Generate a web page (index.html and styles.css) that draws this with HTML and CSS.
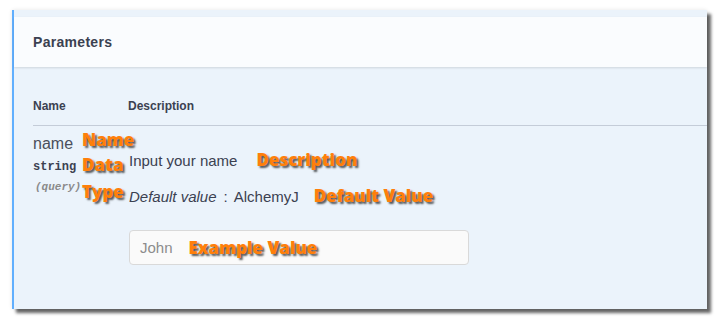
FILE: index.html
```html
<!DOCTYPE html>
<html lang="en">

<head>
    <meta charset="UTF-8">
    <meta name="viewport" content="width=device-width, initial-scale=1.0">
    <title>Parameters</title>
    <link rel="stylesheet" href="styles.css">
</head>

<body>
    <div class="page">
        <section class="opblock">
            <!-- Header của khối tham số -->
            <div class="opblock-header">
                <h4>Parameters</h4>
            </div>

            <div class="params">
                <div class="params-head">
                    <div class="col-name">Name</div>
                    <div class="col-desc">Description</div>
                </div>

                <div class="param-row">
                    <div class="col-name param-left">
                        <div class="param-info">
                            <div class="param-name">name</div>
                            <div class="param-type">string</div>
                            <div class="param-in">(query)</div>
                        </div>
                        <div class="notes">
                            <span class="note note-name">Name</span>
                            <span class="note note-data">Data</span>
                            <span class="note note-type">Type</span>
                        </div>
                    </div>

                    <div class="col-desc param-right">
                        <div class="desc-line first">
                            <span>Input your name</span>
                            <span class="note wide">Description</span>
                        </div>
                        <div class="desc-line second">
                            <span><i>Default value</i><span class="colon">:</span>AlchemyJ</span>
                            <span class="note">Default Value</span>
                        </div>
                        <div class="example-box">
                            <span class="example-text">John</span>
                            <span class="note">Example Value</span>
                        </div>
                    </div>
                </div>
            </div>
        </section>
    </div>
</body>

</html>
```

FILE: styles.css
```css
body {
    margin: 0;
    padding: 0;
    background-color: #fff;
    font-family: "Liberation Sans", Arial, sans-serif;
    color: #3b4151;
}

.page {
    padding: 10px 11px 11px 12px;
}

/* Khối tham số */
.opblock {
    background-color: #ebf3fb;
    border-left: 2px solid #61affe;
    padding-top: 7px;
    box-shadow: 4px 4px 3px rgba(0, 0, 0, 0.6), 0 0 4px rgba(0, 0, 0, 0.1);
}

.opblock-header {
    background-color: #fafcfe;
    height: 50px;
    display: flex;
    align-items: center;
    padding-left: 19px;
    box-shadow: 0 1px 2px rgba(0, 0, 0, 0.12);
}

.opblock-header h4 {
    margin: 0;
    font-size: 14px;
    font-weight: bold;
    letter-spacing: 0.3px;
}

.params {
    padding: 32px 0 44px 19px;
}

.params-head {
    display: flex;
    font-size: 12px;
    font-weight: bold;
    line-height: 15px;
    padding-bottom: 11px;
    border-bottom: 1px solid #c4ccd8;
}

.col-name {
    width: 95px;
    flex-shrink: 0;
}

.param-row {
    display: flex;
}

.param-left {
    display: flex;
}

.param-info {
    width: 49px;
    flex-shrink: 0;
}

.param-name {
    font-size: 16px;
    line-height: 20px;
    margin-top: 8px;
    color: #4a4f5c;
}

.param-type {
    font-family: "Liberation Mono", monospace;
    font-weight: bold;
    font-size: 12px;
    line-height: 16px;
    margin-top: 5px;
}

.param-in {
    font-family: "Liberation Mono", monospace;
    font-style: italic;
    font-weight: bold;
    font-size: 11px;
    line-height: 14px;
    margin-top: 5px;
    margin-left: 2px;
    color: #8a8a8a;
}

/* Chú thích màu cam */
.note {
    font-family: "Open Sans", sans-serif;
    font-weight: 800;
    font-size: 17px;
    line-height: 22px;
    color: #ff7f0a;
    text-shadow: 2px 2px 2px rgba(0, 0, 0, 0.65);
}

.notes {
    display: flex;
    flex-direction: column;
    align-items: flex-start;
    margin-top: 3px;
}

.note-data {
    margin-top: 3px;
}

.note-type {
    margin-top: 5px;
}

.param-right {
    padding-left: 1px;
    font-size: 15px;
}

.desc-line {
    display: flex;
    align-items: baseline;
    gap: 15px;
    line-height: 22px;
}

.desc-line .wide {
    margin-left: 4px;
}

.desc-line.first {
    margin-top: 23px;
}

.desc-line.second {
    margin-top: 13px;
}

.colon {
    margin: 0 6px 0 7px;
}

.example-box {
    box-sizing: border-box;
    margin-top: 22px;
    width: 340px;
    height: 35px;
    border: 1px solid #d9d9d9;
    border-radius: 4px;
    background-color: #fafafa;
    display: flex;
    align-items: center;
    gap: 16px;
    padding-left: 10px;
}

.example-text {
    color: #8c8c8c;
}
```
